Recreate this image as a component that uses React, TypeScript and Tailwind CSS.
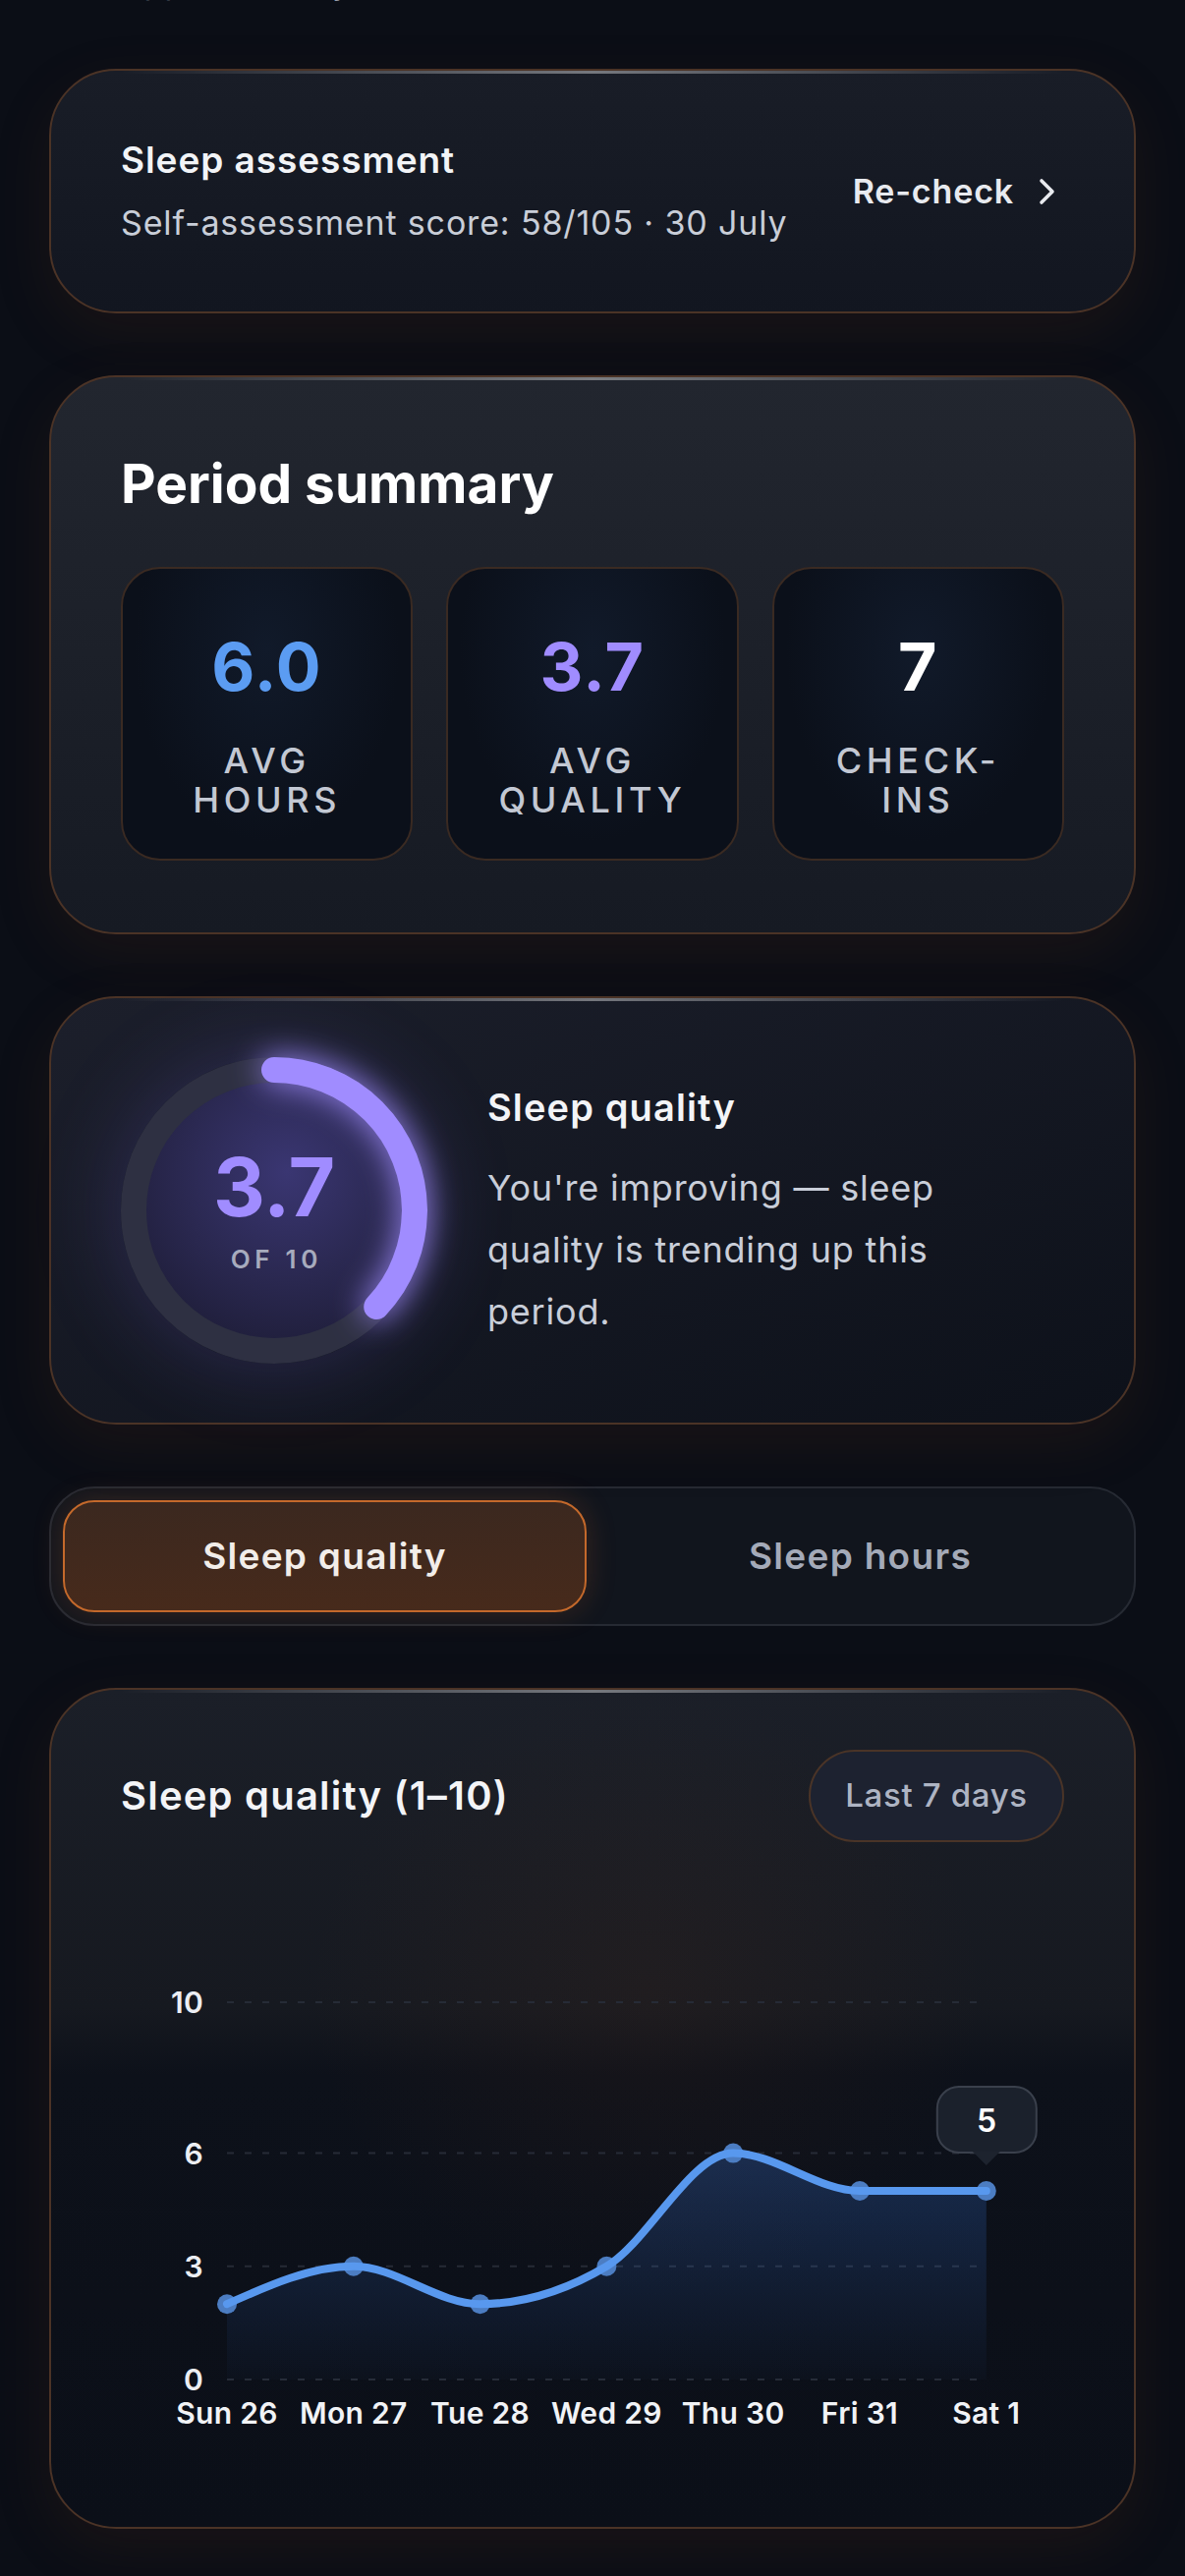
import React from "react";

const days = ["Sun 26", "Mon 27", "Tue 28", "Wed 29", "Thu 30", "Fri 31", "Sat 1"];
const values = [2, 3, 2, 3, 6, 5, 5];

const stats = [
  { value: "6.0", label: "Avg hours", color: "text-[#5b9cf2]" },
  { value: "3.7", label: "Avg quality", color: "text-[#a08cff]" },
  { value: "7", label: "Check-ins", color: "text-white" },
];

// chart geometry (svg coords)
const CW = 958;
const CH = 490;
const X0 = 108;
const STEP = 128.8;
const Y0 = 431;
const UNIT = 38.4;
const yOf = (v: number) => Y0 - v * UNIT;

function monotonePath(pts: [number, number][]) {
  const n = pts.length;
  const t = new Array(n).fill(0);
  const sign = (x: number) => (x < 0 ? -1 : 1);
  for (let i = 1; i < n - 1; i++) {
    const h0 = pts[i][0] - pts[i - 1][0];
    const h1 = pts[i + 1][0] - pts[i][0];
    const s0 = (pts[i][1] - pts[i - 1][1]) / h0;
    const s1 = (pts[i + 1][1] - pts[i][1]) / h1;
    const p = (s0 * h1 + s1 * h0) / (h0 + h1);
    t[i] = (sign(s0) + sign(s1)) * Math.min(Math.abs(s0), Math.abs(s1), 0.5 * Math.abs(p)) || 0;
  }
  const hs = pts[1][0] - pts[0][0];
  t[0] = (3 * (pts[1][1] - pts[0][1]) / hs - t[1]) / 2;
  const he = pts[n - 1][0] - pts[n - 2][0];
  t[n - 1] = (3 * (pts[n - 1][1] - pts[n - 2][1]) / he - t[n - 2]) / 2;

  let d = `M${pts[0][0]},${pts[0][1]}`;
  for (let i = 0; i < n - 1; i++) {
    const dx = (pts[i + 1][0] - pts[i][0]) / 3;
    d += ` C${pts[i][0] + dx},${pts[i][1] + dx * t[i]} ${pts[i + 1][0] - dx},${pts[i + 1][1] - dx * t[i + 1]} ${pts[i + 1][0]},${pts[i + 1][1]}`;
  }
  return d;
}

function Card({ className, children }: { className: string; children: React.ReactNode }) {
  return (
    <div
      className={`relative rounded-[68px] border-2 border-[#4b3326] shadow-[0_20px_60px_rgba(120,60,20,0.13)] ${className}`}
    >
      {/* top edge highlight */}
      <div className="pointer-events-none absolute left-[70px] right-[70px] top-0 h-[3px] bg-gradient-to-r from-transparent via-white/40 to-transparent" />
      {children}
    </div>
  );
}

function Ring() {
  const r = 143;
  const c = 2 * Math.PI * r;
  const pct = 3.7 / 10;
  return (
    <div className="relative h-[312px] w-[312px] shrink-0 rounded-full shadow-[0_0_90px_rgba(130,110,255,0.22)]">
      <svg width="312" height="312" viewBox="0 0 312 312" className="block overflow-visible">
        <defs>
          <radialGradient id="disc" cx="55%" cy="35%" r="70%">
            <stop offset="0%" stopColor="#3a3672" />
            <stop offset="60%" stopColor="#2a2850" />
            <stop offset="100%" stopColor="#1f1e3a" />
          </radialGradient>
          <filter id="glow" x="-50%" y="-50%" width="200%" height="200%">
            <feGaussianBlur stdDeviation="16" result="b" />
            <feMerge>
              <feMergeNode in="b" />
              <feMergeNode in="SourceGraphic" />
            </feMerge>
          </filter>
        </defs>
        <circle cx="156" cy="156" r="132" fill="url(#disc)" />
        <circle cx="156" cy="156" r={r} fill="none" stroke="#2e3042" strokeWidth="26" />
        <circle
          cx="156"
          cy="156"
          r={r}
          fill="none"
          stroke="#a08cff"
          strokeWidth="26"
          strokeLinecap="round"
          strokeDasharray={`${c * pct} ${c}`}
          transform="rotate(-90 156 156)"
          filter="url(#glow)"
        />
      </svg>
      <div className="absolute inset-0 flex flex-col items-center justify-center">
        <div className="text-[82px] font-bold leading-[82px] text-[#a08cff]">3.7</div>
        <div className="mt-[17px] pl-[0.18em] text-[26px] font-semibold leading-[30px] tracking-[0.18em] text-[#a7abbd]">OF 10</div>
      </div>
    </div>
  );
}

function Chart() {
  const pts: [number, number][] = values.map((v, i) => [X0 + i * STEP, yOf(v)]);
  const line = monotonePath(pts);
  const last = pts[pts.length - 1];
  const area = `${line} L${last[0]},${Y0} L${pts[0][0]},${Y0} Z`;
  const xEnd = last[0];
  return (
    <svg width={CW} height={CH} viewBox={`0 0 ${CW} ${CH}`} className="mt-[116px] block tracking-[0.02em]">
      <defs>
        <linearGradient id="area" x1="0" y1="0" x2="0" y2="1">
          <stop offset="0%" stopColor="#3b82f6" stopOpacity="0.24" />
          <stop offset="100%" stopColor="#3b82f6" stopOpacity="0.02" />
        </linearGradient>
      </defs>
      {[10, 6, 3, 0].map((v) => (
        <g key={v}>
          <line x1={X0} x2={xEnd} y1={yOf(v)} y2={yOf(v)} stroke="#262b36" strokeWidth="2" strokeDasharray="7 11" />
          <text
            x="84"
            y={yOf(v)}
            textAnchor="end"
            dominantBaseline="central"
            fill="#eceef3"
            fontSize="30"
            fontWeight="600"
          >
            {v}
          </text>
        </g>
      ))}
      <path d={area} fill="url(#area)" />
      {pts.map(([x, y], i) => (
        <circle key={i} cx={x} cy={y} r="10" fill="#4c7dc2" />
      ))}
      <path d={line} fill="none" stroke="#5898ee" strokeWidth="8" strokeLinecap="round" strokeLinejoin="round" />
      {days.map((d, i) => (
        <text key={d} x={X0 + i * STEP} y="476" textAnchor="middle" fill="#f1f3f6" fontSize="30" fontWeight="600">
          {d}
        </text>
      ))}
      {/* tooltip on last point */}
      <g>
        <rect x={xEnd - 50} y="133" width="101" height="67" rx="22" fill="#1b212c" stroke="#3a404c" strokeWidth="2" />
        <path d={`M${xEnd - 14},199 L${xEnd},213 L${xEnd + 14},199 Z`} fill="#1d232e" />
        <text x={xEnd + 0.5} y="167" textAnchor="middle" dominantBaseline="central" fill="#ffffff" fontSize="32" fontWeight="600">
          5
        </text>
      </g>
    </svg>
  );
}

export default function App() {
  return (
    <div className="min-h-[2622px] w-full overflow-hidden bg-[#0b0e16] font-['Inter','Liberation_Sans',sans-serif] text-white">
      <div className="px-[50px] pb-[50px]">
        <p className="-mt-[38px] h-[40px] pl-[73px] text-[33px] leading-[40px] tracking-[0.025em] text-[#9aa0ad]">Approximately</p>

        <div className="mt-[68px] flex flex-col gap-[63px]">
          {/* Sleep assessment */}
          <Card className="flex h-[249px] items-center justify-between bg-gradient-to-b from-[#191d27] to-[#121620] px-[71px]">
            <div>
              <h3 className="text-[37px] font-semibold leading-[44px] tracking-[0.025em] text-[#f2f4f7]">Sleep assessment</h3>
              <p className="mt-[20px] text-[34px] leading-[44px] tracking-[0.025em] text-[#c9ced8]">
                Self-assessment score: 58/105 · 30 July
              </p>
            </div>
            <button className="mr-[7px] flex items-center gap-[24px] text-[34px] font-semibold tracking-[0.025em] text-[#e8eaef]">
              Re-check
              <svg width="20" height="28" viewBox="0 0 20 28" fill="none">
                <path d="M4 3 L15 14 L4 25" stroke="#e8eaef" strokeWidth="3.6" strokeLinecap="round" strokeLinejoin="round" />
              </svg>
            </button>
          </Card>

          {/* Period summary */}
          <Card className="h-[569px] bg-gradient-to-b from-[#22262f] to-[#161a23] px-[71px] pt-[78px]">
            <h2 className="text-[55px] font-bold leading-[60px] text-white">Period summary</h2>
            <div className="mt-[55px] grid grid-cols-3 gap-[34px]">
              {stats.map((s) => (
                <div
                  key={s.label}
                  className="flex h-[299px] flex-col items-center rounded-[40px] border-2 border-[#3a2a22] bg-[radial-gradient(ellipse_at_50%_28%,#111a2a_0%,#0b101a_65%)] px-[38px] pt-[61px]"
                >
                  <div className={`text-[68px] font-bold leading-[76px] tracking-[0.02em] ${s.color}`}>{s.value}</div>
                  <div className="mt-[38px] text-center text-[36px] font-medium uppercase leading-[40px] tracking-[0.13em] text-[#c3c8d3]">
                    {s.label}
                  </div>
                </div>
              ))}
            </div>
          </Card>

          {/* Sleep quality ring */}
          <Card className="flex h-[436px] items-center gap-[61px] bg-gradient-to-br from-[#1c1f2b] to-[#0d111a] px-[71px]">
            <Ring />
            <div className="w-[540px] pt-[8px]">
              <h3 className="text-[38px] font-semibold leading-[44px] tracking-[0.03em] text-[#f3f4f7]">Sleep quality</h3>
              <p className="mt-[29px] text-[36px] leading-[63px] tracking-[0.022em] text-[#c9ced9]">
                You're improving — sleep quality is trending up this period.
              </p>
            </div>
          </Card>

          {/* Tabs */}
          <div className="grid h-[142px] grid-cols-2 gap-[12px] rounded-[46px] border-2 border-[#262a33] bg-[#11151d] p-[12px]">
            <button className="flex items-center justify-center rounded-[32px] border-2 border-[#c4692b] bg-gradient-to-b from-[#3b281f] to-[#472a1b] text-[37px] font-semibold tracking-[0.035em] text-[#f2ede9] shadow-[0_0_30px_rgba(200,100,40,0.22)]">
              Sleep quality
            </button>
            <button className="flex items-center justify-center text-[37px] font-semibold tracking-[0.035em] text-[#a4aab8]">
              Sleep hours
            </button>
          </div>

          {/* Chart */}
          <Card className="h-[856px] bg-[radial-gradient(ellipse_at_55%_36%,rgba(120,60,25,0.10),transparent_40%),linear-gradient(180deg,#1b1f28_0%,#161920_38%,#0d111a_46%,#0b0f18_100%)] px-[71px] pt-[61px]">
            <div className="flex items-center justify-between">
              <h3 className="text-[40px] font-semibold leading-[44px] tracking-[0.03em] text-[#f3f4f7]">Sleep quality (1–10)</h3>
              <div className="flex h-[94px] w-[260px] items-center justify-center rounded-full border-2 border-[#4a3427] bg-[#1d2230] text-[33px] font-medium tracking-[0.02em] text-[#aeb4c3]">
                Last 7 days
              </div>
            </div>
            <Chart />
          </Card>
        </div>
      </div>
    </div>
  );
}
